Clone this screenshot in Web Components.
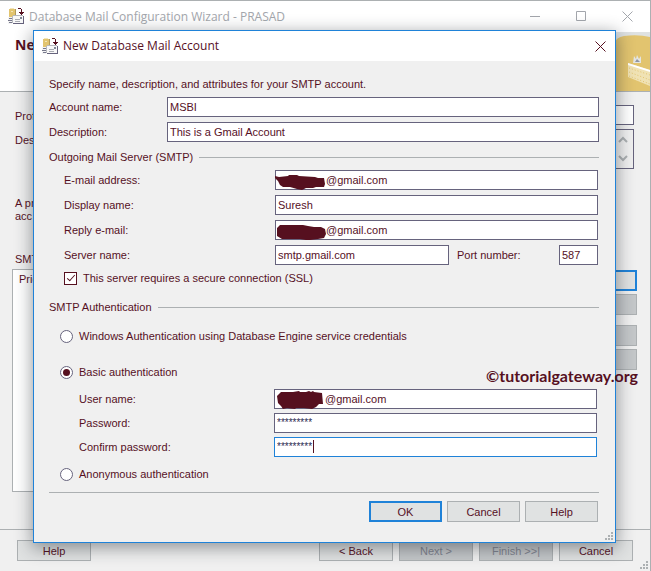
<!DOCTYPE html>
<html lang="en">
<head>
<meta charset="utf-8">
<title>Database Mail Configuration Wizard</title>
<style>
  body {
    margin: 0;
    --ink: #56101f;
    --face: #f0f0f0;
    --line: #acb0b2;
    --edge: #66637d;
    --accent: #1f82d8;
    color: var(--ink);
    font: 11px/14px "Liberation Sans", Arial, sans-serif;
  }
</style>
</head>
<body>
<wizard-window caption="Database Mail Configuration Wizard - PRASAD">
  <mail-dialog caption="New Database Mail Account">
    <p slot="intro" style="margin:0">Specify name, description, and attributes for your SMTP account.</p>
    <form-field slot="account" label="Account name:" value="MSBI"></form-field>
    <form-field slot="account" label="Description:" value="This is a Gmail Account"></form-field>

    <form-field slot="server" label="E-mail address:" value="@gmail.com" masked="a"></form-field>
    <form-field slot="server" label="Display name:" value="Suresh"></form-field>
    <form-field slot="server" label="Reply e-mail:" value="@gmail.com" masked="b"></form-field>
    <form-field slot="host" class="host" label="Server name:" value="smtp.gmail.com"></form-field>
    <form-field slot="host" class="port" label="Port number:" value="587"></form-field>
    <choice-item slot="ssl" kind="checkbox" checked>This server requires a secure connection (SSL)</choice-item>

    <choice-item slot="windows" kind="radio">Windows Authentication using Database Engine service credentials</choice-item>
    <choice-item slot="basic" kind="radio" checked>Basic authentication</choice-item>
    <form-field slot="login" label="User name:" value="@gmail.com" masked="c"></form-field>
    <form-field slot="login" label="Password:" value="*********" secret></form-field>
    <form-field slot="login" label="Confirm password:" value="*********" secret active></form-field>
    <choice-item slot="anonymous" kind="radio">Anonymous authentication</choice-item>

    <push-button slot="actions" primary>OK</push-button>
    <push-button slot="actions">Cancel</push-button>
    <push-button slot="actions">Help</push-button>
  </mail-dialog>
</wizard-window>

<script>
class BaseElement extends HTMLElement {
  render(html) {
    this.attachShadow({ mode: 'open' }).innerHTML = html;
  }
}

customElements.define('mail-icon', class extends BaseElement {
  connectedCallback() {
    this.render(`
      <style>:host{display:block;flex:none;width:17px;height:17px} svg{display:block}</style>
      <svg width="17" height="17" viewBox="0 0 17 17" shape-rendering="crispEdges" aria-hidden="true">
        <path d="M1 1h6v12H1z" fill="#e2c46f"/>
        <path d="M2 0h4v1H2zM3 3h2v1H3z" fill="#f3e6b8"/>
        <path d="M7 1h1v7H7z" fill="#b19a5c"/>
        <path d="M0 9h4v7H0z" fill="#f4f4f4"/>
        <path d="M1 10h3v1H1zM0 12h4v1H0zM1 14h3v1H1z" fill="#77788c"/>
        <path d="M5 8h11v8H5z" fill="#f8f8f8"/>
        <path d="M5 7h10v1H5zM4 8h1v7H4z" fill="#b5b7bd"/>
        <path d="M15 8h1v8H5v-1h10z" fill="#66637d"/>
        <path d="M7 11h5v1H7zM7 13h5v1H7z" fill="#a9abb2"/>
        <path d="M12 9h2v2h-2z" fill="#7f8795"/>
        <path d="M10 0h3v1h-3zM13 1h1v3h2v1h-1v1h-1v1h-1V6h-1V5h-1V4h2z" fill="#56101f"/>
      </svg>`);
  }
});

customElements.define('size-grip', class extends BaseElement {
  connectedCallback() {
    this.render(`
      <style>:host{position:absolute;right:2px;bottom:2px;width:8px;height:8px} svg{display:block}</style>
      <svg width="8" height="8" viewBox="0 0 8 8" shape-rendering="crispEdges" fill="#acb0b2" aria-hidden="true">
        <path d="M6 0h2v2H6zM3 3h2v2H3zM6 3h2v2H6zM0 6h2v2H0zM3 6h2v2H3zM6 6h2v2H6z"/>
      </svg>`);
  }
});

customElements.define('title-bar', class extends BaseElement {
  connectedCallback() {
    const full = this.hasAttribute('full');
    const glyph = {
      Minimize: '<path d="M0 5.5h10"/>',
      Maximize: '<path d="M.5 .5h9v9h-9z"/>',
      Close: '<path d="M.5 .5l10 10M10.5 .5l-10 10"/>'
    };
    const names = full ? ['Minimize', 'Maximize', 'Close'] : ['Close'];
    this.render(`
      <style>
        :host{display:flex;align-items:center;background:#fff;height:30px;padding-left:8px;color:var(--ink)}
        :host([full]){height:31px;color:#a3a6ac}
        span{flex:1;margin-left:4px;font:12px/16px "Open Sans","Noto Sans",sans-serif;white-space:nowrap}
        button{width:30px;height:28px;padding:0;border:0;background:none;color:inherit;display:grid;place-items:center}
        :host([full]) button{width:46px}
        svg{fill:none;stroke:currentColor}
      </style>
      <mail-icon></mail-icon><span>${this.getAttribute('caption')}</span>
      ${names.map(n => `<button type="button" aria-label="${n}"><svg width="11" height="11" viewBox="0 0 11 11">${glyph[n]}</svg></button>`).join('')}`);
  }
});

customElements.define('push-button', class extends BaseElement {
  connectedCallback() {
    const name = this.getAttribute('name');
    this.render(`
      <style>
        :host{display:block;width:73px}
        button{box-sizing:border-box;display:block;width:100%;height:21px;padding:0;border:1px solid var(--line);background:#e0e2e2;color:inherit;font:inherit}
        :host([primary]) button{border:2px solid var(--accent)}
        button:disabled{background:#c4c7c9;color:#80838f}
      </style>
      <button type="button" ${name ? `aria-label="${name}"` : ''} ${this.hasAttribute('disabled') ? 'disabled' : ''}><slot></slot></button>`);
  }
});

const SCRIBBLES = {
  a: 'M0 6l4 1 9-1 1-1 8 0 2 1 16 1 3 1 6 0 1 6-1 3-8 0-3 1-7 0-4 2-5-1-7-2-7 0-3-2-2-4-3-3z',
  b: 'M2 8l3-3 9 0 6 0 8 0 5 1 6 1 7 0 4 2 1 5-2 4-6 1-8 1-4 0-6-1-10 0-8 0-5-3z',
  c: 'M3 7l4-4 7 0 5 0 6-1 1 1 6 0 3-1 2 1 2-1 1 1 8 1 1 11-4 0-3 3-4 2-8-1-8 0-1 1-8-1-4 1-2-3-3-3z'
};

customElements.define('form-field', class extends BaseElement {
  connectedCallback() {
    const mask = SCRIBBLES[this.getAttribute('masked')];
    this.render(`
      <style>
        :host{display:grid;grid-template-columns:var(--label,118px) minmax(0,1fr);align-items:center}
        .box{position:relative;display:grid}
        input{box-sizing:border-box;width:100%;min-width:0;height:20px;margin:0;padding:0 2px;border:1px solid var(--edge);background:#fff;color:inherit;font:inherit;outline:0}
        :host([masked]) input{padding-left:50px}
        :host([secret]) input{font-size:10px;padding-bottom:2px;color:#2d2b52}
        :host([active]) input{border-color:var(--accent)}
        svg{position:absolute;left:0;top:0;pointer-events:none;fill:var(--ink)}
        i{position:absolute;left:39px;top:3px;width:1px;height:13px;background:var(--ink)}
      </style>
      <label for="f">${this.getAttribute('label')}</label>
      <div class="box">
        <input id="f" type="text" autocomplete="off" spellcheck="false" value="${this.getAttribute('value')}">
        ${mask ? `<svg width="51" height="21" viewBox="0 0 51 21" aria-hidden="true"><path d="${mask}"/></svg>` : ''}
        ${this.hasAttribute('active') ? '<i></i>' : ''}
      </div>`);
  }
});

customElements.define('choice-item', class extends BaseElement {
  connectedCallback() {
    const kind = this.getAttribute('kind');
    this.render(`
      <style>
        :host{display:block}
        label{display:flex;align-items:center;gap:6px;height:16px;white-space:nowrap}
        input{appearance:none;flex:none;box-sizing:border-box;width:13px;height:13px;margin:0;border:1px solid var(--ink);background:#fff;display:grid;place-items:center}
        input[type=radio]{border-radius:50%;border-color:var(--edge)}
        input[type=radio]:checked::before{content:"";width:7px;height:7px;border-radius:50%;background:var(--ink)}
        input[type=checkbox]:checked::before{content:"";width:3px;height:7px;margin-bottom:3px;border:solid var(--ink);border-width:0 1px 1px 0;transform:rotate(42deg)}
      </style>
      <label><input type="${kind}" ${this.hasAttribute('checked') ? 'checked' : ''}><slot></slot></label>`);
    const input = this.shadowRoot.querySelector('input');
    input.addEventListener('change', () => {
      if (kind !== 'radio') return;
      for (const other of this.parentElement.querySelectorAll('choice-item[kind=radio]'))
        if (other !== this) other.shadowRoot.querySelector('input').checked = false;
    });
  }
});

customElements.define('group-heading', class extends BaseElement {
  connectedCallback() {
    this.render(`
      <style>
        :host{display:flex;align-items:center;gap:6px;height:20px;white-space:nowrap}
        :host::after{content:"";flex:1;height:1px;background:var(--line)}
      </style><slot></slot>`);
  }
});

customElements.define('mail-dialog', class extends BaseElement {
  connectedCallback() {
    this.render(`
      <style>
        :host{display:block;position:absolute;left:33px;right:34px;top:29px;border:1px solid var(--accent);background:var(--face);box-shadow:0 4px 16px 1px rgba(30,38,44,.45)}
        form{padding:16px 16px 20px 15px}
        .stack{display:grid;gap:5px}
        .account{margin-top:6px}
        .server{padding:3px 1px 0 15px;--label:211px}
        .pair{display:flex;gap:8px}
        ::slotted(.host){flex:1}
        ::slotted(.port){width:141px;--label:102px}
        .auth{padding:0 2px 0 11px}
        .heading2{margin-top:11px}
        .windows{margin-top:11px}
        .basic{margin-top:20px}
        .login{display:grid;gap:4px;margin-top:9px;padding-left:19px;--label:195px}
        .anonymous{margin-top:9px}
        hr{margin:10px 0 8px;border:0;height:1px;background:var(--line)}
        .actions{display:flex;justify-content:flex-end;gap:5px;padding-right:1px}
      </style>
      <title-bar caption="${this.getAttribute('caption')}"></title-bar>
      <form>
        <slot name="intro"></slot>
        <div class="stack account"><slot name="account"></slot></div>
        <group-heading style="margin-top:5px">Outgoing Mail Server (SMTP)</group-heading>
        <div class="stack server">
          <slot name="server"></slot>
          <div class="pair"><slot name="host"></slot></div>
          <slot name="ssl"></slot>
        </div>
        <group-heading class="heading2">SMTP Authentication</group-heading>
        <div class="auth">
          <div class="windows"><slot name="windows"></slot></div>
          <div class="basic"><slot name="basic"></slot></div>
          <div class="login"><slot name="login"></slot></div>
          <div class="anonymous"><slot name="anonymous"></slot></div>
        </div>
        <hr>
        <div class="actions"><slot name="actions"></slot></div>
      </form>
      <size-grip></size-grip>`);
  }
});

customElements.define('brand-mark', class extends BaseElement {
  connectedCallback() {
    this.render(`
      <style>
        :host{position:absolute;right:12px;top:365px;font:bold 16px/20px Lato,"Open Sans",sans-serif;white-space:nowrap}
      </style>©tutorialgateway.org`);
  }
});

customElements.define('wizard-window', class extends BaseElement {
  connectedCallback() {
    this.render(`
      <style>
        :host{display:flex;flex-direction:column;position:relative;box-sizing:border-box;min-height:100vh;overflow:hidden;border:solid var(--line);border-width:1px 1px 0 0;background:var(--face)}
        header{display:flex;justify-content:space-between;height:59px;background:#fff;border-bottom:1px solid var(--line)}
        h1{margin:4px 0 0 15px;font:bold 14px/18px "Open Sans",sans-serif}
        main{flex:1;display:flex;flex-direction:column;padding:13px 13px 37px 12px}
        .row{display:grid;grid-template-columns:118px 1fr;margin:0 3px 4px}
        .row label{padding-top:4px}
        .row input,.row textarea{box-sizing:border-box;width:100%;height:20px;margin:0;padding:0 2px;border:1px solid var(--edge);background:#fff;resize:none;font:inherit}
        .area{position:relative;display:grid}
        .row textarea{height:40px;overflow:hidden}
        .area svg{position:absolute;right:1px;top:1px}
        p{margin:24px 3px 30px;line-height:13px;white-space:nowrap}
        h2{margin:0 3px 3px;font:inherit;line-height:13px}
        .accounts{flex:1;display:flex;gap:10px}
        .list{flex:1;border:1px solid var(--line);background:#fff;padding:2px 6px}
        .side{display:grid;align-content:start;gap:3px;padding-top:1px}
        .side :nth-child(3){margin-top:7px}
        footer{display:flex;gap:6px;padding:10px 17px;border-top:1px solid var(--line)}
        footer push-button{width:74px}
        footer :first-child{margin-right:auto}
      </style>
      <title-bar full caption="${this.getAttribute('caption')}"></title-bar>
      <header>
        <h1>Ne</h1>
        <svg width="36" height="59" viewBox="0 0 36 59" aria-hidden="true">
          <path d="M0 0h36v59H0z" fill="#dfe2e2"/>
          <path d="M0 59V12Q2 5 10 4Q24 2 36 5V59z" fill="#e2c46f"/>
          <path d="M14 31l22 7v16L14 45z" fill="#f0e2b4"/>
          <path d="M14 31l22 7v2L14 33z" fill="#fff"/>
          <path d="M15 36l21 7M15 40l21 8M15 44l21 8" stroke="#e2c46f" stroke-dasharray="1 2"/>
          <path d="M19 31l1-7 2 3 1-4 2 4 2-3 0 7z" fill="#e3e5e5"/>
          <path d="M21 30l2-3 3 3z" fill="#8f95a2"/>
        </svg>
      </header>
      <main>
        <div class="row"><label for="n">Prof</label><input id="n" aria-label="Profile name"></div>
        <div class="row"><label for="d">Des</label>
          <div class="area"><textarea id="d" aria-label="Description"></textarea>
            <svg width="17" height="38" viewBox="0 0 17 38" aria-hidden="true"><path d="M0 0h17v38H0z" fill="#f0f0f0"/><path d="M3 12l4-4 4 4M3 26l4 4 4-4" fill="none" stroke="#acb0b2" stroke-width="2"/></svg>
          </div>
        </div>
        <p>A pr<br>acc</p>
        <h2>SMT</h2>
        <div class="accounts">
          <div class="list">Pric</div>
          <div class="side">
            <push-button primary name="Add"></push-button>
            <push-button disabled name="Remove"></push-button>
            <push-button disabled name="Move up"></push-button>
            <push-button disabled name="Move down"></push-button>
          </div>
        </div>
      </main>
      <footer>
        <push-button>Help</push-button>
        <push-button>&lt; Back</push-button>
        <push-button disabled>Next &gt;</push-button>
        <push-button disabled>Finish &gt;&gt;|</push-button>
        <push-button>Cancel</push-button>
      </footer>
      <size-grip></size-grip>
      <slot></slot>
      <brand-mark></brand-mark>`);
  }
});
</script>
</body>
</html>
